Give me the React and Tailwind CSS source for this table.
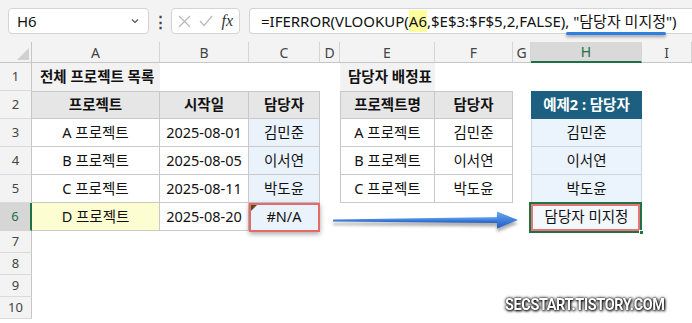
const FONT = "font-['Noto_Sans','Noto_Sans_CJK_KR',sans-serif]";

const cellCls = {
  empty: "bg-white",
  title: "bg-[#f2f2f2] font-bold justify-start pl-2",
  head: "bg-[#e7e6e6] font-bold border-t border-r border-b border-[#c9c9c9]",
  headL: "bg-[#e7e6e6] font-bold border-t border-l border-r border-b border-[#c9c9c9]",
  body: "bg-white border-r border-b border-[#c9c9c9]",
  bodyL: "bg-white border-l border-r border-b border-[#c9c9c9]",
  blue: "bg-[#eaf3fb] border-r border-b border-[#c9c9c9]",
  yellow: "bg-[#fdfdd2] border-r border-b border-[#c9c9c9]",
  dark: "bg-[#1d5f80] text-white font-bold border border-[#1d5f80]",
  blueH: "bg-[#ebf4fc] border-l border-r border-b border-[#cdd6df]",
  sel: "bg-[#f3f8fc]",
};

const E = ["empty", ""];

const rows = [
  [["title", "전체 프로젝트 목록"], E, E, E, ["title", "담당자 배정표"], E, E, E, E],
  [["head", "프로젝트"], ["head", "시작일"], ["head", "담당자"], E, ["headL", "프로젝트명"], ["head", "담당자"], E, ["dark", "예제2 : 담당자"], E],
  [["body", "A 프로젝트"], ["body", "2025-08-01"], ["blue", "김민준"], E, ["bodyL", "A 프로젝트"], ["body", "김민준"], E, ["blueH", "김민준"], E],
  [["body", "B 프로젝트"], ["body", "2025-08-05"], ["blue", "이서연"], E, ["bodyL", "B 프로젝트"], ["body", "이서연"], E, ["blueH", "이서연"], E],
  [["body", "C 프로젝트"], ["body", "2025-08-11"], ["blue", "박도윤"], E, ["bodyL", "C 프로젝트"], ["body", "박도윤"], E, ["blueH", "박도윤"], E],
  [["yellow", "D 프로젝트"], ["body", "2025-08-20"], ["blue", "#N/A"], E, E, E, E, ["sel", "담당자 미지정"], E],
  [E, E, E, E, E, E, E, E, E],
  [E, E, E, E, E, E, E, E, E],
  [E, E, E, E, E, E, E, E, E],
  [E, E, E, E, E, E, E, E, E],
];

const letters = ["A", "B", "C", "D", "E", "F", "G", "H", "I"];

export default function App() {
  return (
    <div className={`relative w-[692px] h-[323px] overflow-hidden bg-white text-[#111] ${FONT}`}>
      {/* formula bar */}
      <div className="flex h-[42px] bg-[#f3f3f3] pt-2 pl-2">
        <div className="flex h-[26px] w-[141px] shrink-0 items-center justify-between rounded border border-[#d4d4d4] bg-white pl-2 pr-2 text-[15px]">
          <span>H6</span>
          <svg width="10" height="10" viewBox="0 0 10 10">
            <path d="M2 3.5 L5 6.5 L8 3.5" fill="none" stroke="#555" strokeWidth="1.2" />
          </svg>
        </div>
        <div className="flex h-[26px] w-[22px] shrink-0 items-center justify-center text-[15px] font-bold text-[#444]">⋮</div>
        <div className="flex h-[26px] w-[69px] shrink-0 items-center justify-between rounded border border-[#d4d4d4] bg-white px-[6px]">
          <svg width="13" height="13" viewBox="0 0 13 13">
            <path d="M1 1 L12 12 M12 1 L1 12" stroke="#b8b8b8" strokeWidth="1.2" />
          </svg>
          <svg width="14" height="12" viewBox="0 0 14 12">
            <path d="M1 6 L5 10.5 L13 1" fill="none" stroke="#b8b8b8" strokeWidth="1.2" />
          </svg>
          <span className="font-['Liberation_Serif',serif] text-[16px] italic leading-none text-[#333]">fx</span>
        </div>
        <div className="ml-[9px] flex h-[26px] min-w-0 flex-1 items-center overflow-hidden rounded-l border border-r-0 border-[#d4d4d4] bg-white pl-[11px] text-[15px] whitespace-nowrap">
          <span>=IFERROR(VLOOKUP(</span>
          <span className="bg-[#ffff9e]">A6</span>
          <span>,$E$3:$F$5,2,FALSE), "담당자 미지정")</span>
        </div>
      </div>

      {/* sheet */}
      <div className="grid grid-cols-[32px_128px_89px_71px_20px_95px_78px_18px_111px_1fr] grid-rows-[21px_repeat(6,28px)_repeat(4,22px)] text-[14.5px]">
        <div className="relative border-r border-b border-[#c6c6c6] bg-[#f3f3f3]">
          <svg className="absolute right-[2px] bottom-[2px]" width="12" height="12" viewBox="0 0 12 12">
            <polygon points="12,0 12,12 0,12" fill="#d0d0d0" />
          </svg>
        </div>
        {letters.map((l) =>
          l === "H" ? (
            <div key={l} className="flex items-center justify-center border-r border-b-2 border-r-[#d5d5d5] border-b-[#1e7145] bg-[#d9d9d9] text-[14px] text-[#1e7145]">
              {l}
            </div>
          ) : (
            <div key={l} className="flex items-center justify-center border-r border-b border-r-[#d5d5d5] border-b-[#c6c6c6] bg-[#f3f3f3] text-[14px] text-[#444]">
              {l}
            </div>
          )
        )}
        {rows.map((r, i) => (
          <Row key={i} n={i + 1} cells={r} />
        ))}
      </div>

      {/* C6 error highlight */}
      <div className="absolute left-[249px] top-[203px] h-[29px] w-[71px] border-2 border-[#e56b6b] shadow-[0_2px_5px_rgba(0,0,0,0.35)]" />
      <div className="absolute left-[251px] top-[205px] h-0 w-0 border-t-[6px] border-r-[6px] border-t-[#5b4a1c] border-r-transparent" />

      {/* H6 selection */}
      <div className="absolute left-[529px] top-[202px] h-[31px] w-[113px] border-2 border-[#1f7244]" />
      <div className="absolute left-[531px] top-[204px] h-[27px] w-[109px] border-2 border-[#e87474]" />
      <div className="absolute left-[639px] top-[230px] h-[5px] w-[5px] bg-[#1f7244] border border-white" />

      {/* arrow */}
      <svg className="absolute left-[328px] top-[208px]" width="196" height="30" viewBox="0 0 196 30">
        <defs>
          <linearGradient id="ag" x1="0" y1="0" x2="0" y2="1">
            <stop offset="0" stopColor="#6aa8f2" />
            <stop offset="1" stopColor="#1c5cc4" />
          </linearGradient>
          <filter id="sh" x="-10%" y="-50%" width="120%" height="200%">
            <feGaussianBlur stdDeviation="1.6" />
          </filter>
        </defs>
        <g transform="translate(0,3)" filter="url(#sh)" fill="#777" opacity="0.6">
          <polygon points="5,12 172,9.5 172,15.5 5,14" />
          <polygon points="169,4 190,12.5 169,21" />
        </g>
        <polygon points="5,11.5 172,9 172,15 5,13.5" fill="url(#ag)" />
        <polygon points="169,3.5 190,12 169,20.5" fill="url(#ag)" />
      </svg>

      {/* underline under formula string */}
      <div className="absolute left-[566px] top-[32px] h-[3px] w-[100px] rounded-full bg-[#2d7fe0] shadow-[0_2px_3px_rgba(0,0,0,0.35)]" />

      {/* watermark */}
      <div className="absolute left-[505px] top-[296px] origin-left scale-x-[0.85] font-['Roboto',sans-serif] text-[17px] font-bold leading-none tracking-tight text-white [text-shadow:0_0_2px_#000,1px_1px_3px_#000,0_0_4px_#333]">
        SECSTART.TISTORY.COM
      </div>
    </div>
  );
}

function Row({ n, cells }) {
  const active = n === 6;
  return (
    <>
      <div
        className={
          active
            ? "flex items-center justify-center border-r-2 border-b border-r-[#1e7145] border-b-[#d5d5d5] bg-[#d6d6d6] text-[13px] text-[#1e7145]"
            : "flex items-center justify-center border-r border-b border-r-[#c6c6c6] border-b-[#dadada] bg-[#f3f3f3] text-[13px] text-[#444]"
        }
      >
        {n}
      </div>
      {cells.map(([k, t], j) => (
        <div key={j} className={`flex items-center justify-center whitespace-nowrap ${cellCls[k]}`}>
          {t}
        </div>
      ))}
    </>
  );
}
